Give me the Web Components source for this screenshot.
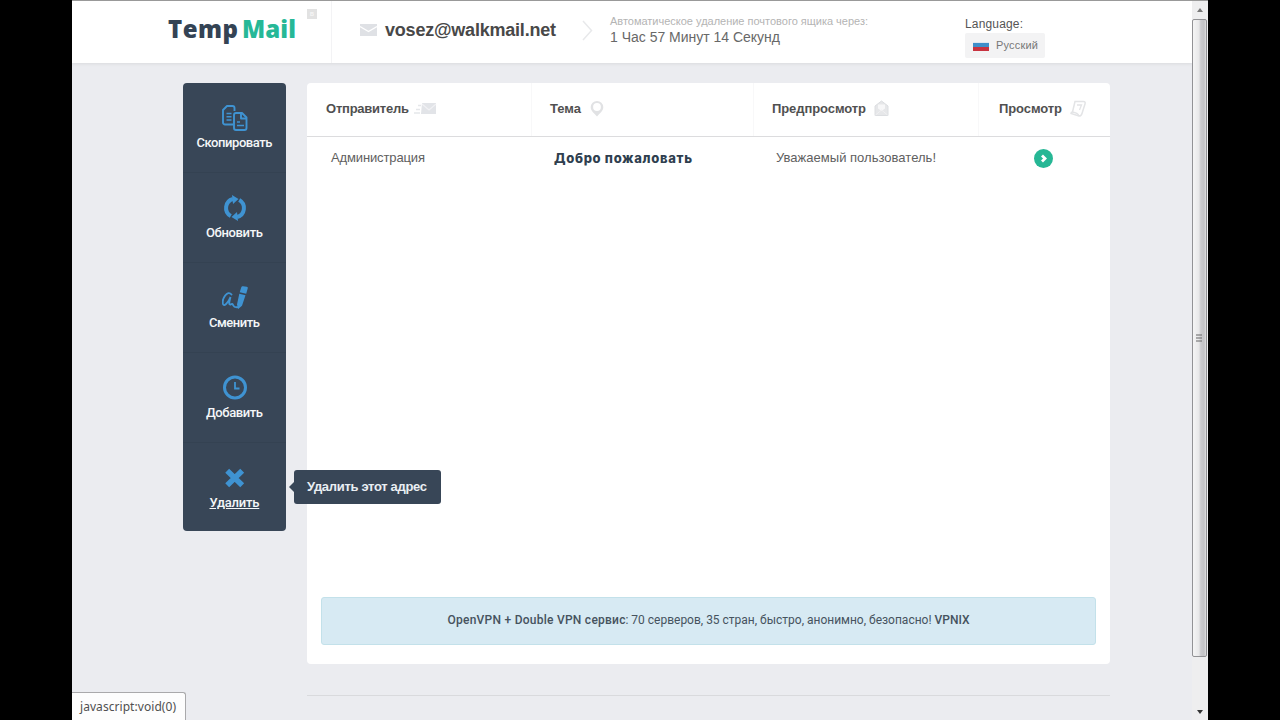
<!DOCTYPE html>
<html lang="ru">
<head>
<meta charset="utf-8">
<title>TempMail</title>
<style>
    body {
        margin: 0;
        height: 720px;
        overflow: hidden;
        background: #000;
        font-family: "Liberation Sans", Arial, sans-serif;
        color: #555;
    }
</style>
</head>
<body>
<mail-app></mail-app>

<script>
// Single line of text, tracked so that it fills the given width
class TrackedText extends HTMLElement {
    constructor() {
        super();
        this.attachShadow({ mode: 'open' });
        this.shadowRoot.innerHTML = `
            <style>
                :host { display: inline-block; white-space: nowrap; flex: none; }
            </style>
            <slot></slot>
        `;
    }

    connectedCallback() {
        const width = parseFloat(this.getAttribute('width'));
        const count = this.textContent.length;
        if (!width || count < 2) return;
        const natural = this.getBoundingClientRect().width;
        const spacing = (width - natural) / (count - 1);
        this.style.letterSpacing = `${spacing}px`;
        this.style.marginRight = `${-spacing}px`;
    }
}

const ICONS = {
    copy: `<g fill="none" stroke="#3f93d2" stroke-width="1.9" stroke-linejoin="round">
        <path d="M11.500 19.500H3a2 2 0 0 1-2-2V5l4-4h5.500a2 2 0 0 1 2 2v3"/>
        <path d="M12 10a2 2 0 0 1 2-2h6l4.500 4.500V23a2 2 0 0 1-2 2H14a2 2 0 0 1-2-2z"/>
        <path d="M19 8.500v5h5.500"/></g>
        <path d="M4.500 8.500h5M4.500 11.800h5M4.500 15h5M15 17h3M15 20.500h7" stroke="#3f93d2" stroke-width="1.600"/>`,
    refresh: `<g fill="none" stroke="#3f93d2" stroke-width="4">
        <path d="M8.800 21.100A9.300 9.300 0 0 1 11 4"/>
        <path d="M17.200 4.900A9.300 9.300 0 0 1 15 22"/></g>
        <path d="M10 0l6.500 4-5.500 5zM16 26l-6.500-4 5.500-5z" fill="#3f93d2"/>`,
    sign: `<path d="M9.500 9.500C5.500 4.500-.5 14 1 19c1.200 3.500 5.500-2 7.500-7-1 4-2.500 8.500.5 7.300 1.500-.6 1.500-.8 2.300 1.200.7 1.700 2 2 4.700 1.700" fill="none" stroke="#3f93d2" stroke-width="1.900" stroke-linecap="round"/>
        <path d="M19.200 2.500c.3-1 1-1.500 2-1.300l3.500.6c1 .2 1.300.8 1 1.800l-1.500 5.200-6.500-1.500zM17.300 8.800l6.200 1.500-3.500 10.500-3.800 3.200-1.200-4.500z" fill="#3f93d2"/>`,
    clock: `<circle cx="13" cy="12.500" r="10.500" fill="none" stroke="#3f93d2" stroke-width="3"/>
        <path d="M13 7v6.500h4.500" fill="none" stroke="#3f93d2" stroke-width="1.800"/>`,
    cross: `<path d="M5.200 5.700l15 14.500M20.200 5.700l-15 14.500" stroke="#3f93d2" stroke-width="5.600"/>`,
    sender: `<path d="M8 3h14v11H7z" fill="#e2e4e8"/><path d="M8 4l7 6 7-6" fill="none" stroke="#f1f1f4" stroke-width="1.200"/>
        <path d="M4 5.500h3M2 9.500h4M0 13h6" stroke="#e5e7ea" stroke-width="1.300"/>`,
    pin: `<path d="M7 1a6.300 6.300 0 0 0-6.300 6.300C.7 11 4 13 7 16.500c3-3.500 6.300-5.500 6.300-9.200A6.300 6.300 0 0 0 7 1z" fill="#e1e2e4"/><circle cx="7" cy="7" r="3.900" fill="#fff"/>`,
    letter: `<path d="M1 6l6.500-5L14 6v9.500H1z" fill="#e6e7e9" stroke="#dcdee1"/>
        <path d="M4 4.500h7v4L7.500 11 4 8.500z" fill="#f7f7f8"/><path d="M1.500 15l6-5 6 5" fill="none" stroke="#f0f0f2"/>`,
    scroll: `<path d="M5 1.500h8.500c1.500 0 2 1 1.500 2.500L12 13.500c-.5 2-1.500 2.500-3 2.500L1 13.500c0-1 .5-1.500 1.500-1.500z" fill="none" stroke="#e3e4e6" stroke-width="1.500"/>
        <path d="M2.500 12c3 .5 5.500 1.500 6.500 4M7 5h4.500l-2 5" fill="none" stroke="#e3e4e6" stroke-width="1.300"/>`,
    mail: `<path d="M0 0h17v12H0z" fill="#dfe1e5"/><path d="M0 2.500l8.500 5L17 2.500" fill="none" stroke="#fff" stroke-width="1.400"/>`,
    chevron: `<path d="M1 2l8.500 9.500L1 21" fill="none" stroke="#e8e9eb" stroke-width="1.500"/>`,
    open: `<circle cx="9.500" cy="9.500" r="9.500" fill="#26b795"/><path d="M8 6.500l3 3-3 3" fill="none" stroke="#fff" stroke-width="2.800"/>`
};

class AppIcon extends HTMLElement {
    connectedCallback() {
        if (this.shadowRoot) return;
        const [w, h] = this.getAttribute('size').split('x');
        this.attachShadow({ mode: 'open' }).innerHTML = `
            <style>
                :host { display: block; flex: none; width: ${w}px; height: ${h}px; }
                svg { display: block; }
            </style>
            <svg width="${w}" height="${h}" viewBox="0 0 ${w} ${h}">${ICONS[this.getAttribute('name')]}</svg>
        `;
    }
}

class SiteHeader extends HTMLElement {
    constructor() {
        super();
        this.attachShadow({ mode: 'open' });
        this.shadowRoot.innerHTML = `
            <style>
                :host {
                    display: flex;
                    box-sizing: border-box;
                    height: 63px;
                    border-top: 1px solid #999;
                    background: #fff;
                    box-shadow: 0 1px 3px #d9dadd;
                }
                .logo {
                    display: flex;
                    box-sizing: border-box;
                    width: 260px;
                    padding-left: 96px;
                    border-right: 1px solid #f3f3f5;
                    font: 800 24px/56px "Open Sans", sans-serif;
                    color: #344354;
                }
                .logo .mail { margin-left: 4px; color: #26b897; }
                .badge {
                    width: 10px;
                    height: 10px;
                    margin: 8px 0 0 11px;
                    background: #e2e2e2;
                    font: bold 7px/10px "Liberation Sans", sans-serif;
                    text-align: center;
                    color: #f4f4f4;
                }
                .address {
                    display: flex;
                    align-items: center;
                    gap: 8px;
                    height: 57px;
                    padding-left: 28px;
                    font: bold 18px/22px "Liberation Sans", sans-serif;
                    color: #484848;
                }
                .address app-icon { margin-top: 1px; }
                .chevron { margin: 18px 0 0 26px; }
                .timer { display: flex; flex-direction: column; align-items: flex-start; padding: 13px 0 0 16px; }
                .timer .hint { font-size: 11px; line-height: 14px; color: #b4b4b4; }
                .timer .left { font-size: 14px; line-height: 18px; color: #686868; }
                .lang { display: flex; flex-direction: column; align-items: flex-start; padding: 15px 0 0 97px; font-size: 12px; line-height: 17px; }
                .button {
                    display: flex;
                    align-items: center;
                    gap: 7px;
                    box-sizing: border-box;
                    width: 80px;
                    height: 25px;
                    padding: 0 0 1px 8px;
                    border-radius: 2px;
                    background: #f3f3f4;
                    font-size: 11px;
                    color: #777;
                }
                .flag { width: 16px; height: 9px; margin-top: 2px; background: linear-gradient(#dfe8f0 1px, #3f8fca 1px 5px, #c83340 5px); }
            </style>
            <div class="logo">
                <tracked-text width="70">Temp</tracked-text>
                <tracked-text class="mail" width="54">Mail</tracked-text>
                <span class="badge">в</span>
            </div>
            <div class="address">
                <app-icon name="mail" size="17x12"></app-icon>
                <tracked-text width="171">vosez@walkmail.net</tracked-text>
            </div>
            <app-icon class="chevron" name="chevron" size="12x23"></app-icon>
            <div class="timer">
                <tracked-text class="hint" width="258">Автоматическое удаление почтового ящика через:</tracked-text>
                <tracked-text class="left" width="170">1 Час 57 Минут 14 Секунд</tracked-text>
            </div>
            <div class="lang">
                <tracked-text width="58">Language:</tracked-text>
                <div class="button"><span class="flag"></span><tracked-text width="42">Русский</tracked-text></div>
            </div>
        `;
    }
}

class SideMenu extends HTMLElement {
    constructor() {
        super();
        this.attachShadow({ mode: 'open' });
        this.shadowRoot.innerHTML = `
            <style>
                :host {
                    display: block;
                    flex: none;
                    width: 103px;
                    height: 448px;
                    border-radius: 4px;
                    background: #384657;
                }
            </style>
            <slot></slot>
        `;
    }
}

class MenuItem extends HTMLElement {
    connectedCallback() {
        if (this.shadowRoot) return;
        const tip = this.getAttribute('tip');
        this.attachShadow({ mode: 'open' }).innerHTML = `
            <style>
                :host {
                    position: relative;
                    display: flex;
                    flex-direction: column;
                    align-items: center;
                    box-sizing: border-box;
                    height: 90px;
                    padding-top: 22px;
                    border-bottom: 1px solid #344252;
                    font: 500 13px/20px Roboto, sans-serif;
                    color: #f4f6f8;
                }
                :host(:last-child) { border-bottom: 0; height: 88px; }
                :host([active]) .label { text-decoration: underline; text-underline-offset: 1px; }
                .label { margin-top: 2px; }
                .tip {
                    position: absolute;
                    left: 111px;
                    top: 27px;
                    box-sizing: border-box;
                    width: 147px;
                    height: 34px;
                    padding-left: 13px;
                    border-radius: 3px;
                    background: #384657;
                    font: bold 13px/33px "Liberation Sans", sans-serif;
                    color: #e9eef3;
                }
                .tip::before {
                    content: "";
                    position: absolute;
                    left: -5px;
                    top: 12px;
                    border: 5px solid transparent;
                    border-left: 0;
                    border-right-color: #384657;
                }
            </style>
            <app-icon name="${this.getAttribute('icon')}" size="26x26"></app-icon>
            <tracked-text class="label" width="${this.getAttribute('label-width')}">${this.getAttribute('label')}</tracked-text>
            ${tip ? `<div class="tip"><tracked-text width="120">${tip}</tracked-text></div>` : ''}
        `;
    }
}

class MailList extends HTMLElement {
    constructor() {
        super();
        this.attachShadow({ mode: 'open' });
        this.shadowRoot.innerHTML = `
            <style>
                :host {
                    display: flex;
                    flex-direction: column;
                    box-sizing: border-box;
                    width: 803px;
                    height: 581px;
                    border-radius: 4px;
                    background: #fff;
                }
                .row { display: grid; grid-template-columns: 225px 222px 225px 131px; }
                .head { height: 53px; border-bottom: 1px solid #dcdcde; font: bold 13px/50px "Liberation Sans", sans-serif; color: #505050; }
                .head > div { display: flex; align-items: center; box-sizing: border-box; padding: 0 0 2px 19px; }
                .head > div:not(:last-child) { border-right: 1px solid #f8f8f9; }
                .head > div:nth-child(2) { padding-left: 18px; }
                .head > div:nth-child(3) { padding-left: 18px; }
                .head > div:nth-child(4) { padding-left: 20px; }
                .mark { margin: 0 0 0 9px; }
                .mark.near { margin-left: 5px; }
                .mark.left { margin-left: 8px; }
                .body { height: 42px; font-size: 13px; line-height: 42px; color: #606060; }
                .body > div { padding-left: 24px; }
                .body > div:nth-child(2) { padding-left: 22px; font: 800 13px/42px Inter, sans-serif; color: #2f3f4f; }
                .body > div:nth-child(3) { padding-left: 22px; }
                .body > .go { display: flex; align-items: center; padding: 1px 0 0 55px; }
                .banner {
                    display: flex;
                    justify-content: center;
                    align-items: center;
                    box-sizing: border-box;
                    height: 48px;
                    margin: auto 14px 19px;
                    padding-bottom: 2px;
                    border: 1px solid #c3e1ea;
                    border-radius: 3px;
                    background: #d7eaf3;
                    font: 12px/16px Roboto, sans-serif;
                    color: #46535e;
                }
                .banner .strong { font-weight: 500; }
                .banner .strong:last-child { margin-left: 3px; }
            </style>
            <div class="row head">
                <div><tracked-text width="83">Отправитель</tracked-text><app-icon class="mark near" name="sender" size="23x17"></app-icon></div>
                <div><tracked-text width="31">Тема</tracked-text><app-icon class="mark" name="pin" size="15x17"></app-icon></div>
                <div><tracked-text width="94">Предпросмотр</tracked-text><app-icon class="mark left" name="letter" size="16x17"></app-icon></div>
                <div><tracked-text width="63">Просмотр</tracked-text><app-icon class="mark left" name="scroll" size="17x17"></app-icon></div>
            </div>
            <div class="row body">
                <div><tracked-text width="94">Администрация</tracked-text></div>
                <div><tracked-text width="138">Добро пожаловать</tracked-text></div>
                <div><tracked-text width="160">Уважаемый пользователь!</tracked-text></div>
                <div class="go"><app-icon name="open" size="19x19"></app-icon></div>
            </div>
            <div class="banner">
                <tracked-text class="strong" width="178">OpenVPN + Double VPN сервис</tracked-text>
                <tracked-text width="306">: 70 серверов, 35 стран, быстро, анонимно, безопасно!</tracked-text>
                <tracked-text class="strong" width="35">VPNIX</tracked-text>
            </div>
        `;
    }
}

class ScrollBar extends HTMLElement {
    constructor() {
        super();
        this.attachShadow({ mode: 'open' });
        this.shadowRoot.innerHTML = `
            <style>
                :host {
                    display: flex;
                    flex-direction: column;
                    box-sizing: border-box;
                    width: 16px;
                    height: 720px;
                    border-top: 1px solid #999;
                    background: #eeeeef;
                }
                svg { display: block; flex: none; }
                .thumb {
                    display: flex;
                    align-items: center;
                    justify-content: center;
                    box-sizing: border-box;
                    width: 15px;
                    height: 638px;
                    border: 1px solid #929295;
                    border-radius: 2px;
                    background: linear-gradient(90deg, #f5f5f5, #e8e8e9 45%, #cbcbce 60%, #c3c3c6 85%, #e0e0e0);
                }
                .down { margin-top: auto; }
            </style>
            <svg width="16" height="18"><path d="M5 11l3-4 3 4z" fill="#777"/></svg>
            <div class="thumb"><svg width="7" height="8"><path d="M0 1h6M0 4h6M0 7h6" stroke="#666" stroke-width="1.200"/></svg></div>
            <svg class="down" width="16" height="18"><path d="M5 8h6l-3 4z" fill="#333"/></svg>
        `;
    }
}

class MailApp extends HTMLElement {
    constructor() {
        super();
        this.attachShadow({ mode: 'open' });
        this.shadowRoot.innerHTML = `
            <style>
                :host { display: flex; width: 1136px; height: 720px; margin: 0 auto; }
                .page { position: relative; overflow: hidden; width: 1120px; background: #ebecf0; }
                main { display: flex; gap: 21px; padding: 20px 0 0 111px; }
                .line { height: 1px; margin: 31px 82px 0 235px; background: #d9dadd; }
                .status {
                    position: absolute;
                    left: 0;
                    bottom: 0;
                    box-sizing: border-box;
                    width: 114px;
                    height: 28px;
                    padding-left: 8px;
                    border: 1px solid #a9a9ab;
                    border-left: 0;
                    border-bottom: 0;
                    border-radius: 0 3px 0 0;
                    background: #fdfdfd;
                    font: 12px/27px "Noto Sans", sans-serif;
                    color: #505050;
                }
            </style>
            <div class="page">
                <site-header></site-header>
                <main>
                    <side-menu>
                        <menu-item icon="copy" label="Скопировать" label-width="76"></menu-item>
                        <menu-item icon="refresh" label="Обновить" label-width="57"></menu-item>
                        <menu-item icon="sign" label="Сменить" label-width="51"></menu-item>
                        <menu-item icon="clock" label="Добавить" label-width="57"></menu-item>
                        <menu-item icon="cross" label="Удалить" label-width="50" tip="Удалить этот адрес" active></menu-item>
                    </side-menu>
                    <mail-list></mail-list>
                </main>
                <div class="line"></div>
                <div class="status"><tracked-text width="96">javascript:void(0)</tracked-text></div>
            </div>
            <scroll-bar></scroll-bar>
        `;
    }
}

customElements.define('app-icon', AppIcon);
customElements.define('site-header', SiteHeader);
customElements.define('side-menu', SideMenu);
customElements.define('menu-item', MenuItem);
customElements.define('mail-list', MailList);
customElements.define('scroll-bar', ScrollBar);
customElements.define('mail-app', MailApp);
// Defined last: it measures itself inside the finished layout
customElements.define('tracked-text', TrackedText);
</script>
</body>
</html>
